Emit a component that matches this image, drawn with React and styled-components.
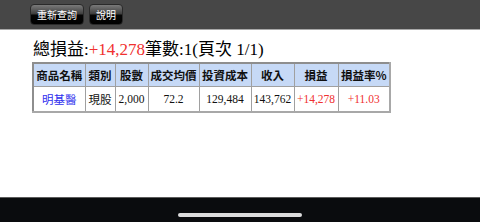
import React from "react";
import styled, { createGlobalStyle } from "styled-components";

const Global = createGlobalStyle`
  html, body { margin: 0; padding: 0; background: #fff; }
  #root { height: 100vh; }
`;

const Page = styled.div`
  height: 100vh;
  display: flex;
  flex-direction: column;
  font-family: "Liberation Serif", "Noto Sans CJK TC", serif;
`;

const TopBar = styled.div`
  height: 29px;
  flex: none;
  background: #474747;
  border-bottom: 1px solid #a8a8a8;
  display: flex;
  align-items: center;
  gap: 5px;
  padding-left: 30px;
`;

const Btn = styled.button`
  height: 21px;
  padding: 0 6px;
  border: 1px solid #2a2a2a;
  border-radius: 4px;
  background: linear-gradient(#7a7a7a 0%, #3c3c3c 48%, #050505 52%, #000 100%);
  color: #fff;
  font-family: "Noto Sans CJK TC", sans-serif;
  font-size: 10px;
  line-height: 19px;
  cursor: pointer;
`;

const Main = styled.div`
  flex: 1;
  padding: 8px 0 0 32px;
`;

const Title = styled.div`
  font-size: 17px;
  line-height: 23px;
  color: #000;
  margin-bottom: 1px;
  margin-left: 1px;
`;

const Red = styled.span`
  color: ${(p) => p.$c || "#f03030"};
`;

const Table = styled.table`
  border-collapse: collapse;
  border: 2px solid #8e8e8e;
  border-right-color: #a8a8a8;
  border-bottom-color: #a8a8a8;
  font-size: 11px;
`;

const Th = styled.th`
  background: #c6d9f6;
  border: 1px solid #a0a0a0;
  height: 23px;
  padding: 0;
  font-family: "Noto Sans CJK TC", sans-serif;
  font-size: 11.5px;
  font-weight: bold;
  color: #111;
  width: ${(p) => p.$w}px;
  box-sizing: border-box;
`;

const Td = styled.td`
  border: 1px solid #a0a0a0;
  height: 24px;
  padding: 0;
  text-align: center;
  color: ${(p) => p.$c || "#111"};
  font-size: ${(p) => (p.$cjk ? "11.5px" : "11.5px")};
  font-family: ${(p) =>
    p.$cjk ? '"Noto Sans CJK TC", sans-serif' : '"Liberation Serif", serif'};
`;

const BottomBar = styled.div`
  height: 25px;
  flex: none;
  background: #0a0c0e;
  border-top: 1px solid #5c5c5c;
  display: flex;
  justify-content: center;
  padding-top: 15px;
  box-sizing: border-box;
`;

const Home = styled.div`
  width: 124px;
  height: 4px;
  border-radius: 2px;
  background: #dcdcdc;
`;

const cols = [
  ["商品名稱", 52],
  ["類別", 30],
  ["股數", 33],
  ["成交均價", 51],
  ["投資成本", 52],
  ["收入", 43],
  ["損益", 44],
  ["損益率%", 52],
];

export default function App() {
  return (
    <Page>
      <Global />
      <TopBar>
        <Btn>重新查詢</Btn>
        <Btn>說明</Btn>
      </TopBar>
      <Main>
        <Title>
          總損益:<Red>+14,278</Red>筆數:1(頁次 1/1)
        </Title>
        <Table>
          <thead>
            <tr>
              {cols.map(([t, w]) => (
                <Th key={t} $w={w}>
                  {t}
                </Th>
              ))}
            </tr>
          </thead>
          <tbody>
            <tr>
              <Td $cjk $c="#2f2fee">明基醫</Td>
              <Td $cjk>現股</Td>
              <Td>2,000</Td>
              <Td>72.2</Td>
              <Td>129,484</Td>
              <Td>143,762</Td>
              <Td $c="#f03030">+14,278</Td>
              <Td $c="#f03030">+11.03</Td>
            </tr>
          </tbody>
        </Table>
      </Main>
      <BottomBar>
        <Home />
      </BottomBar>
    </Page>
  );
}
